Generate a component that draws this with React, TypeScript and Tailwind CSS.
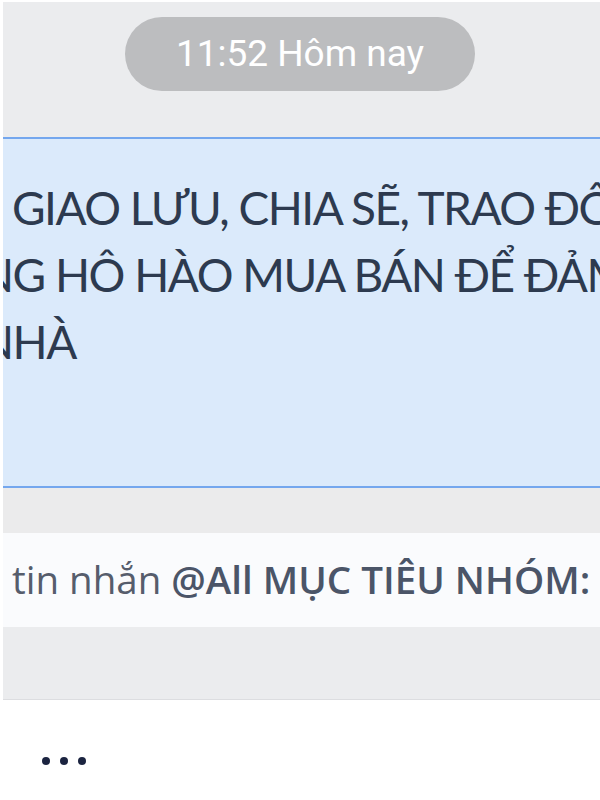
import React from 'react'

const lines = [
  { text: 'GIAO LƯU, CHIA SẼ, TRAO ĐỔI', shift: 'pl-[12px]' },
  { text: 'NG HÔ HÀO MUA BÁN ĐỂ ĐẢM BẢO', shift: 'ml-[-21px]' },
  { text: 'NHÀ', shift: 'ml-[-21px]' },
]

export default function App() {
  return (
    <div className="relative flex h-[800px] w-[600px] flex-col overflow-hidden bg-white font-['Lato',sans-serif]">
      {/* dòng thời gian */}
      <div className="flex h-[137px] shrink-0 justify-center bg-[#ebecee] pt-[17px]">
        <div className="flex h-[74px] w-[350px] items-center justify-center rounded-full bg-[#bcbdbf] font-['Roboto',sans-serif] text-[37px] text-white">
          11:52 Hôm nay
        </div>
      </div>

      {/* tin ghim */}
      <div className="h-[351px] shrink-0 overflow-hidden border-y-2 border-[#74a7ee] bg-[#dbeafb] pt-[35px] text-[#2d3a4f]">
        {lines.map((l) => (
          <div
            key={l.text}
            className={`whitespace-nowrap text-[46px] leading-[67px] tracking-[-1.5px] ${l.shift}`}
          >
            {l.text}
          </div>
        ))}
      </div>

      <div className="h-[45px] shrink-0 bg-[#ebebec]" />

      {/* trả lời */}
      <div className="flex h-[94px] shrink-0 items-center overflow-hidden whitespace-nowrap bg-[#fafbfd] pl-[12px] font-['Open_Sans',sans-serif] text-[38.5px] text-[#565d6c]">
        <span>tin nhắn&nbsp;</span>
        <span className="font-semibold text-[#4b5568]">@All MỤC TIÊU NHÓM:</span>
      </div>

      <div className="h-[73px] shrink-0 border-b border-[#dcdde0] bg-[#ebecee]" />

      {/* đang soạn */}
      <div className="flex flex-1 items-start gap-[10px] pl-[42px] pt-[57px]">
        <span className="h-[8px] w-[8px] rounded-full bg-[#1b2440]" />
        <span className="h-[8px] w-[8px] rounded-full bg-[#1b2440]" />
        <span className="h-[8px] w-[8px] rounded-full bg-[#1b2440]" />
      </div>

      <div className="pointer-events-none absolute inset-0 border-l-[3px] border-t-2 border-white" />
    </div>
  )
}
